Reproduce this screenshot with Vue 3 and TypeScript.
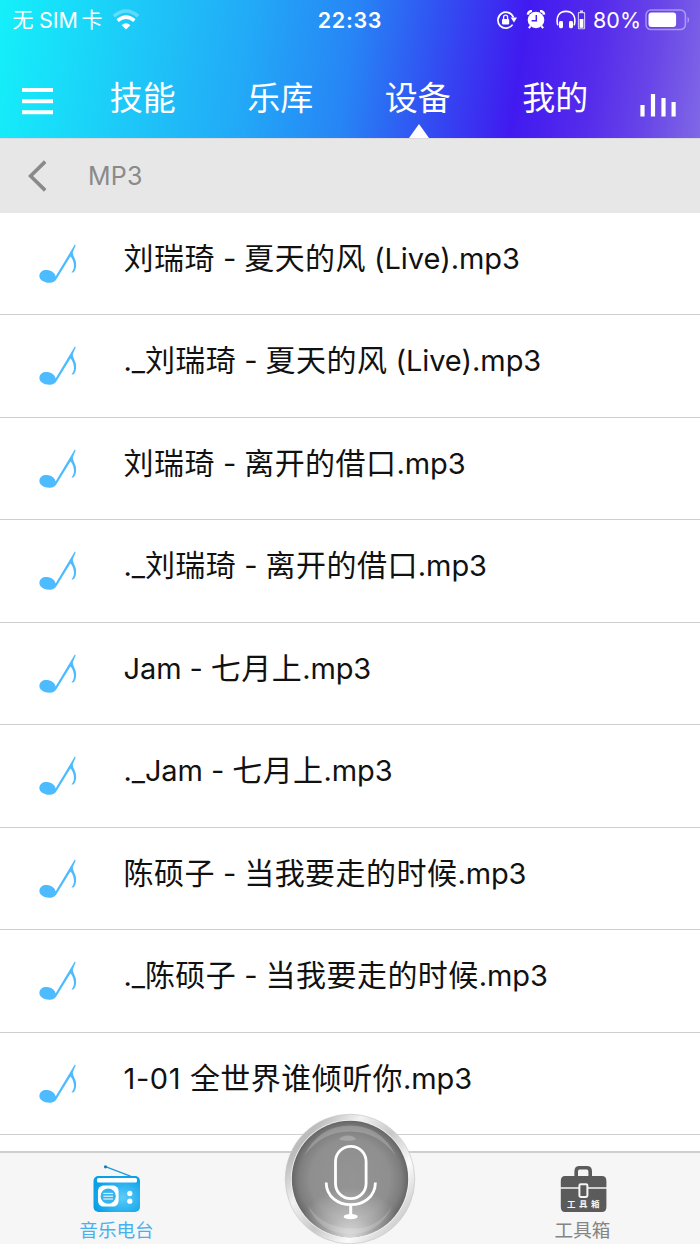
<script setup lang="ts">
interface Run {
  text: string
  kind: 'han' | 'latin' | 'number'
}

const tabs: string[] = ['技能', '乐库', '设备', '我的']
const activeTab = '设备'

const tracks: string[] = [
  '刘瑞琦 - 夏天的风 (Live).mp3',
  '._刘瑞琦 - 夏天的风 (Live).mp3',
  '刘瑞琦 - 离开的借口.mp3',
  '._刘瑞琦 - 离开的借口.mp3',
  'Jam - 七月上.mp3',
  '._Jam - 七月上.mp3',
  '陈硕子 - 当我要走的时候.mp3',
  '._陈硕子 - 当我要走的时候.mp3',
  '1-01 全世界谁倾听你.mp3',
]

function kindOf(text: string): Run['kind'] {
  if (/[\u4e00-\u9fff]/.test(text)) return 'han'
  return /^\d/.test(text) ? 'number' : 'latin'
}

// Splits a title into Chinese and Latin runs so each gets its own spacing.
function runs(title: string): Run[] {
  return (title.match(/[\u4e00-\u9fff]+|[^\u4e00-\u9fff]+/g) ?? []).map((text) => ({
    text,
    kind: kindOf(text),
  }))
}
</script>

<template>
  <div class="screen">
    <header class="top">
      <div class="status">
        <div class="carrier">
          <span>无</span><span class="sim">SIM</span><span>卡</span>
          <svg class="wifi" width="28" height="22" viewBox="0 0 28 22">
            <path d="M1.8 7.2Q14-3.2 26.2 7.2" fill="none" stroke="#fff" stroke-opacity=".3" stroke-width="3.6" />
            <path d="M5.6 11.6Q14 4.6 22.4 11.6" fill="none" stroke="#fff" stroke-width="3.5" />
            <path d="M9.6 16.2Q14 12.4 18.4 16.2L14 20.6Z" fill="#fff" />
          </svg>
        </div>
        <time class="clock">22:33</time>
        <div class="indicators">
          <svg class="lock" width="22" height="20" viewBox="0 0 22 20">
            <path d="M17.4 7.4A8 8 0 1 0 16.6 14.6" fill="none" stroke="#fff" stroke-width="1.7" />
            <path d="M14.6 7.6H21L18 12.4Z" fill="#fff" />
            <rect x="6" y="9" width="7.2" height="5.4" rx=".8" fill="#fff" />
            <path d="M7.6 9V7.2a2 2 0 0 1 4 0V9" fill="none" stroke="#fff" stroke-width="1.3" />
          </svg>
          <svg class="alarm" width="20" height="20" viewBox="0 0 20 20">
            <circle cx="10" cy="10" r="8.3" fill="#fff" />
            <path d="M1.8 4.6A4 4 0 0 1 6 1M18.2 4.6A4 4 0 0 0 14 1" fill="none" stroke="#fff" stroke-width="2.4" />
            <path d="M4.6 16L2.8 18.2M15.4 16L17.2 18.2" stroke="#fff" stroke-width="2" />
            <path d="M10.3 5V10.8H5.6" fill="none" stroke="#4324ee" stroke-width="1.5" />
          </svg>
          <svg class="phones" width="30" height="20" viewBox="0 0 30 20">
            <path d="M1.8 15.4C-.6 6 3.6 1.4 10 1.4S20.6 6 18.2 15.4" fill="none" stroke="#fff" stroke-width="1.6" />
            <rect x="3" y="11" width="4" height="7.2" rx="1.4" fill="#fff" />
            <rect x="13" y="11" width="4" height="7.2" rx="1.4" fill="#fff" />
            <rect x="22.4" y="2.6" width="6.2" height="16.2" rx=".6" fill="none" stroke="#fff" stroke-opacity=".75" stroke-width="1.1" />
            <rect x="24" y=".4" width="3" height="2" fill="#fff" fill-opacity=".75" />
            <rect x="23.6" y="9" width="3.8" height="8.8" fill="#fff" />
          </svg>
          <span class="percent">80%</span>
          <svg class="battery" width="46" height="22" viewBox="0 0 46 22">
            <rect x="1" y="1" width="39.4" height="19.6" rx="5" fill="none" stroke="#fff" stroke-opacity=".42" stroke-width="1.5" />
            <rect x="3.5" y="3.5" width="27.6" height="14.6" rx="3" fill="#fff" />
            <path d="M42.6 7.4Q45.4 10.8 42.6 14.2Z" fill="#fff" fill-opacity=".5" />
          </svg>
        </div>
      </div>
      <nav class="nav">
        <svg class="menu" width="31" height="27" viewBox="0 0 31 27">
          <path d="M0 2H31M0 13.2H31M0 24.3H31" stroke="#fff" stroke-width="4" />
        </svg>
        <span v-for="tab in tabs" :key="tab" class="tab" :class="{ active: tab === activeTab }">{{ tab }}</span>
        <svg class="equalizer" width="36" height="24" viewBox="0 0 36 24">
          <path d="M2.5 12V23.5M13 1V23.5M23.5 5V23.5M33.6 9V23.5" stroke="#fff" stroke-width="4.2" />
        </svg>
      </nav>
    </header>

    <div class="crumb">
      <svg width="20" height="32" viewBox="0 0 20 32">
        <path d="M17.2 1.6L2.6 16L17.2 30.4" fill="none" stroke="#8a8a8a" stroke-width="3.6" />
      </svg>
      <span>MP3</span>
    </div>

    <main class="list">
      <div v-for="track in tracks" :key="track" class="row">
        <svg class="note" width="38" height="40" viewBox="0 0 38 40">
          <path d="M.4 31.400C.8 27.600 4.200 25.600 8.200 26C12.600 26.400 16 29.200 16.600 32.400L35.800 .6L36.700 1.200L33.800 8.200C34 13.200 37.600 15.400 37.100 21.400C36.800 25.400 35.600 28.800 32.400 28.600C35.200 25.400 35.400 22 34.500 18.400C33.900 15.800 32.600 13.800 31.400 12.600L17.400 35.200C15.800 37.600 14 38.800 10.600 38.700C4.400 38.600 0 35.400 .4 31.400Z" fill="#4dbbff" />
        </svg>
        <span class="title"><span v-for="(run, i) in runs(track)" :key="i" :class="run.kind">{{ run.text }}</span></span>
      </div>
    </main>

    <footer class="bar">
      <div class="item radio">
        <svg width="48" height="48" viewBox="0 0 48 48">
          <defs>
            <radialGradient id="radioBody" cx=".62" cy=".6" r=".65">
              <stop offset="0" stop-color="#5ccbfa" />
              <stop offset="1" stop-color="#079fe6" />
            </radialGradient>
          </defs>
          <path d="M12.5 2.6L38 12.4" stroke="#1b9bd8" stroke-width="1.3" />
          <circle cx="12.5" cy="2.8" r="1.6" fill="#147bb8" />
          <rect x=".5" y="12" width="46.5" height="36" rx="5" fill="url(#radioBody)" />
          <rect x="4" y="14" width="40" height="4.6" rx="1.6" fill="#fff" />
          <rect x="5" y="21.6" width="20.6" height="21" rx="5.5" fill="#fff" />
          <circle cx="15.2" cy="32.2" r="7.6" fill="#36b4ed" />
          <path d="M10.4 29.4H20M10.4 32.2H20M10.4 35H20" stroke="#fff" stroke-width="1" />
          <circle cx="36.8" cy="29.4" r="2.6" fill="#fff" />
          <circle cx="36.8" cy="37.2" r="2.6" fill="#fff" />
        </svg>
        <span>音乐电台</span>
      </div>
      <div class="item toolbox">
        <svg width="48" height="48" viewBox="0 0 48 48">
          <path d="M16.2 13V7.4Q16.2 3.8 19.6 3.8H26.8Q30.2 3.8 30.2 7.4V13" fill="none" stroke="#5b5b5b" stroke-width="3.6" />
          <path d="M5 12H42Q46.4 12 46.4 17V23.2H.8V17Q.8 12 5 12Z" fill="#5b5b5b" />
          <path d="M.8 24.8H46.4V43Q46.4 48 42 48H5Q.8 48 .8 43Z" fill="#5b5b5b" />
          <rect x="19.4" y="20.2" width="8" height="12.8" rx="1.4" fill="#5b5b5b" stroke="#f6f6f6" stroke-width="2" />
          <text class="plate" x="25" y="43.3" text-anchor="middle">工具箱</text>
        </svg>
        <span>工具箱</span>
      </div>
      <svg class="mic" width="132" height="132" viewBox="0 0 132 132">
        <defs>
          <linearGradient id="rim" x1="0" y1=".1" x2="1" y2=".9">
            <stop offset="0" stop-color="#c4c4c4" />
            <stop offset=".14" stop-color="#bcbcbc" />
            <stop offset=".32" stop-color="#f2f2f2" />
            <stop offset=".52" stop-color="#c8c8c8" />
            <stop offset=".72" stop-color="#fcfcfc" />
            <stop offset="1" stop-color="#b4b4b4" />
          </linearGradient>
          <radialGradient id="face" cx=".5" cy=".5" r=".5">
            <stop offset="0" stop-color="#949494" />
            <stop offset=".68" stop-color="#8f8f8f" />
            <stop offset=".88" stop-color="#7e7e7e" />
            <stop offset="1" stop-color="#666" />
          </radialGradient>
          <radialGradient id="glow" gradientUnits="userSpaceOnUse" cx="66" cy="130" r="56">
            <stop offset="0" stop-color="#fff" stop-opacity=".85" />
            <stop offset=".5" stop-color="#fff" stop-opacity=".35" />
            <stop offset="1" stop-color="#fff" stop-opacity="0" />
          </radialGradient>
        </defs>
        <circle cx="66" cy="66" r="64.8" fill="url(#rim)" stroke="#c9c9c9" stroke-width=".7" />
        <circle cx="66" cy="66" r="59" fill="#f4f4f4" />
        <circle cx="66" cy="66" r="58.2" fill="url(#face)" />
        <circle cx="66" cy="66" r="58.2" fill="url(#glow)" />
        <path d="M20 43Q35 12.500 66 12.500T112 43Q94 18.500 66 18.500T20 43Z" fill="#fff" fill-opacity=".2" />
        <path d="M23 91Q37 114 66 115.500T109 91Q97 121 66 121T23 91Z" fill="#fff" fill-opacity=".16" />
        <path d="M55 26.5Q58 22.5 64 22.5T72 26.5Q64 29 55 26.5Z" fill="#fff" fill-opacity=".22" />
        <rect x="51.5" y="33.3" width="30.6" height="52.4" rx="15.3" fill="none" stroke="#fff" stroke-width="2.8" />
        <path d="M42.2 69.5C42.4 99 91.2 99 91.4 69.5" fill="none" stroke="#fff" stroke-width="2.8" />
        <path d="M66.7 92V104" stroke="#fff" stroke-width="3" />
        <ellipse cx="66.7" cy="103.7" rx="7" ry="2.6" fill="#fff" />
      </svg>
    </footer>
  </div>
</template>

<style>
body {
  margin: 0;
  background: #fff;
}
</style>

<style scoped>
.screen {
  width: 700px;
  height: 1244px;
  display: flex;
  flex-direction: column;
  overflow: hidden;
  background: #fff;
  font-family: Inter, "Noto Sans CJK SC", sans-serif;
}
svg {
  display: block;
  flex: none;
}
.top {
  height: 138px;
  flex: none;
  color: #fff;
  background: linear-gradient(98deg, #14f0fa 0%, #1dc8f8 20%, #22aaf7 35%, #2784f5 50%, #3152f2 61%, #411af0 73.5%, #562ceb 84%, #6845e8 92%, #8068e6 100%);
}
.status {
  height: 40px;
  display: grid;
  grid-template-columns: 1fr auto 1fr;
  align-items: center;
  font-size: 21px;
  line-height: 40px;
}
.carrier {
  display: flex;
  align-items: center;
  padding-left: 12.5px;
}
.sim {
  margin: 0 3.5px 0 5.5px;
  font-size: 21.5px;
}
.wifi {
  margin-left: 9px;
}
.clock {
  font-weight: 600;
  font-size: 21.5px;
  letter-spacing: 0.7px;
}
.indicators {
  display: flex;
  justify-content: flex-end;
  align-items: center;
  padding-right: 9px;
}
.lock,
.alarm,
.phones,
.battery {
  margin-top: -1px;
}
.alarm {
  margin-left: 8px;
}
.phones {
  margin-left: 10px;
}
.percent {
  margin: 0 4px 0 7px;
  font-size: 21.5px;
}
.nav {
  height: 98px;
  display: flex;
  align-items: flex-start;
  padding-left: 22px;
}
.menu {
  margin: 47.5px 21px 0 0;
}
.tab {
  width: 137.5px;
  height: 98px;
  box-sizing: border-box;
  padding-top: 34px;
  position: relative;
  text-align: center;
  font-size: 33px;
  line-height: 48px;
  font-weight: 400;
}
.tab.active::after {
  content: "";
  position: absolute;
  left: 59.5px;
  bottom: 0;
  border: 10.5px solid transparent;
  border-top: 0;
  border-bottom: 14px solid #fff;
}
.equalizer {
  margin: 52.5px 0 0 16px;
}
.crumb {
  height: 74.5px;
  flex: none;
  box-sizing: border-box;
  border-top: 1px solid #d9d9de;
  display: flex;
  align-items: center;
  padding-left: 28px;
  background: #e7e7e7;
  color: #8a8a8a;
  font-size: 25px;
}
.crumb span {
  margin-left: 40px;
  letter-spacing: 0.2px;
}
.list {
  flex: 1;
  min-height: 0;
  padding-top: 0.3px;
  overflow: hidden;
}
.row {
  height: 102.5px;
  box-sizing: border-box;
  border-bottom: 1px solid #cfcfcf;
  display: flex;
  align-items: flex-start;
  padding-left: 39px;
}
.note {
  margin-top: 31px;
}
.title {
  margin: 19px 0 0 46.5px;
  white-space: pre;
  font-size: 29px;
  line-height: 48px;
  color: #111;
}
.latin {
  letter-spacing: -0.1px;
}
.number {
  letter-spacing: 0.6px;
}
.han {
  font-size: 30px;
  font-family: "Noto Sans CJK SC", sans-serif;
  letter-spacing: 0.45px;
}
.bar {
  height: 93px;
  flex: none;
  box-sizing: border-box;
  position: relative;
  border-top: 2px solid #cfcfcf;
  background: #f6f6f6;
  display: flex;
  justify-content: space-between;
}
.item {
  width: 233px;
  display: flex;
  flex-direction: column;
  align-items: center;
  padding-top: 11px;
  font-size: 18.6px;
  line-height: 28px;
}
.item span {
  margin-top: 4px;
}
.radio {
  color: #45b2f0;
}
.toolbox {
  color: #858585;
}
.toolbox > span {
  margin-right: 2px;
}
.plate {
  fill: #f6f6f6;
  font-size: 8.5px;
  font-weight: 700;
  letter-spacing: 3.5px;
}
.mic {
  position: absolute;
  left: 284px;
  top: -40px;
}
</style>
